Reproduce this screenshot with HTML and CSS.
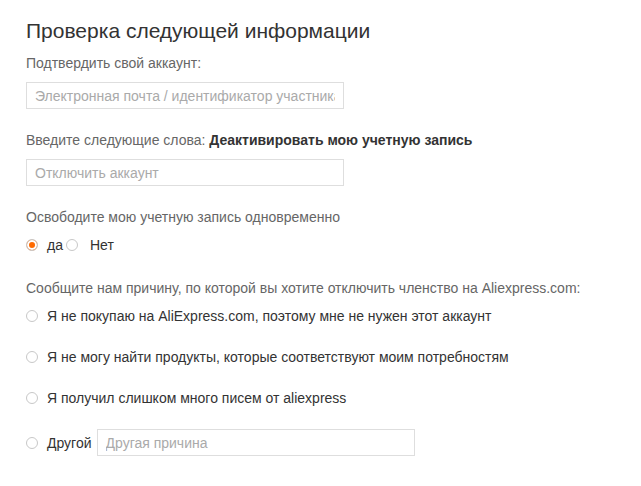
FILE: index.html
```html
<!DOCTYPE html>
<html lang="ru">
<head>
<meta charset="UTF-8">
<title>Проверка</title>
<link rel="stylesheet" href="styles.css">
</head>
<body>
<div class="page">
    <h2 class="title">Проверка следующей информации</h2>

    <div class="field">
        <div class="label">Подтвердить свой аккаунт:</div>
        <input type="text" class="text-input" placeholder="Электронная почта / идентификатор участника">
    </div>

    <div class="field">
        <div class="label">Введите следующие слова: <b>Деактивировать мою учетную запись</b></div>
        <input type="text" class="text-input" placeholder="Отключить аккаунт">
    </div>

    <div class="field field-radio">
        <div class="label">Освободите мою учетную запись одновременно</div>
        <div class="yes-no">
            <label class="radio"><span class="dot checked"></span>да</label>
            <label class="radio"><span class="dot"></span>Нет</label>
        </div>
    </div>

    <div class="field">
        <div class="label">Сообщите нам причину, по которой вы хотите отключить членство на Aliexpress.com:</div>
        <ul class="reasons">
            <li><span class="dot"></span>Я не покупаю на AliExpress.com, поэтому мне не нужен этот аккаунт</li>
            <li><span class="dot"></span>Я не могу найти продукты, которые соответствуют моим потребностям</li>
            <li><span class="dot"></span>Я получил слишком много писем от aliexpress</li>
            <li><span class="dot"></span>Другой <input type="text" class="text-input other" placeholder="Другая причина"></li>
        </ul>
    </div>
</div>
</body>
</html>
```

FILE: styles.css
```css
body {
    margin: 0;
    font-family: Arial, "Liberation Sans", sans-serif;
    background-color: #fff;
    color: #333;
}
.page {
    padding: 18px 26px;
}
.title {
    margin: 0 0 10px;
    font-size: 21px;
    font-weight: normal;
    color: #333;
    line-height: 26px;
}
.field {
    margin-bottom: 22px;
}
.field-radio {
    margin-bottom: 24px;
}
.label {
    font-size: 14px;
    color: #666;
    line-height: 18px;
    margin-bottom: 10px;
}
.label b {
    color: #333;
}
.text-input {
    display: block;
    width: 318px;
    height: 27px;
    padding: 0 8px;
    border: 1px solid #dedede;
    box-sizing: border-box;
    font-family: inherit;
    font-size: 14px;
    color: #333;
    outline: none;
}
.text-input::placeholder {
    color: #aaa;
}
.yes-no {
    display: flex;
    align-items: center;
    margin-top: -1px;
    font-size: 14px;
    color: #333;
    height: 20px;
}
.radio {
    display: flex;
    align-items: center;
}
.dot {
    display: inline-block;
    width: 10px;
    height: 10px;
    border: 1px solid #c8c8c8;
    border-radius: 50%;
    margin-right: 9px;
    flex-shrink: 0;
    background: #fff;
    box-sizing: content-box;
}
.dot.checked {
    background: #ff6a00;
    box-shadow: inset 0 0 0 2px #fff;
}
.yes-no .radio + .radio .dot {
    margin-left: 3px;
    margin-right: 12px;
}
.reasons {
    list-style: none;
    margin: -1px 0 0;
    padding: 0;
    font-size: 14px;
    color: #333;
}
.reasons li {
    display: flex;
    align-items: center;
    height: 20px;
    margin-bottom: 21px;
}
.reasons li:last-child {
    height: 27px;
}
.reasons .other {
    display: inline-block;
    margin-left: 5px;
}
```
